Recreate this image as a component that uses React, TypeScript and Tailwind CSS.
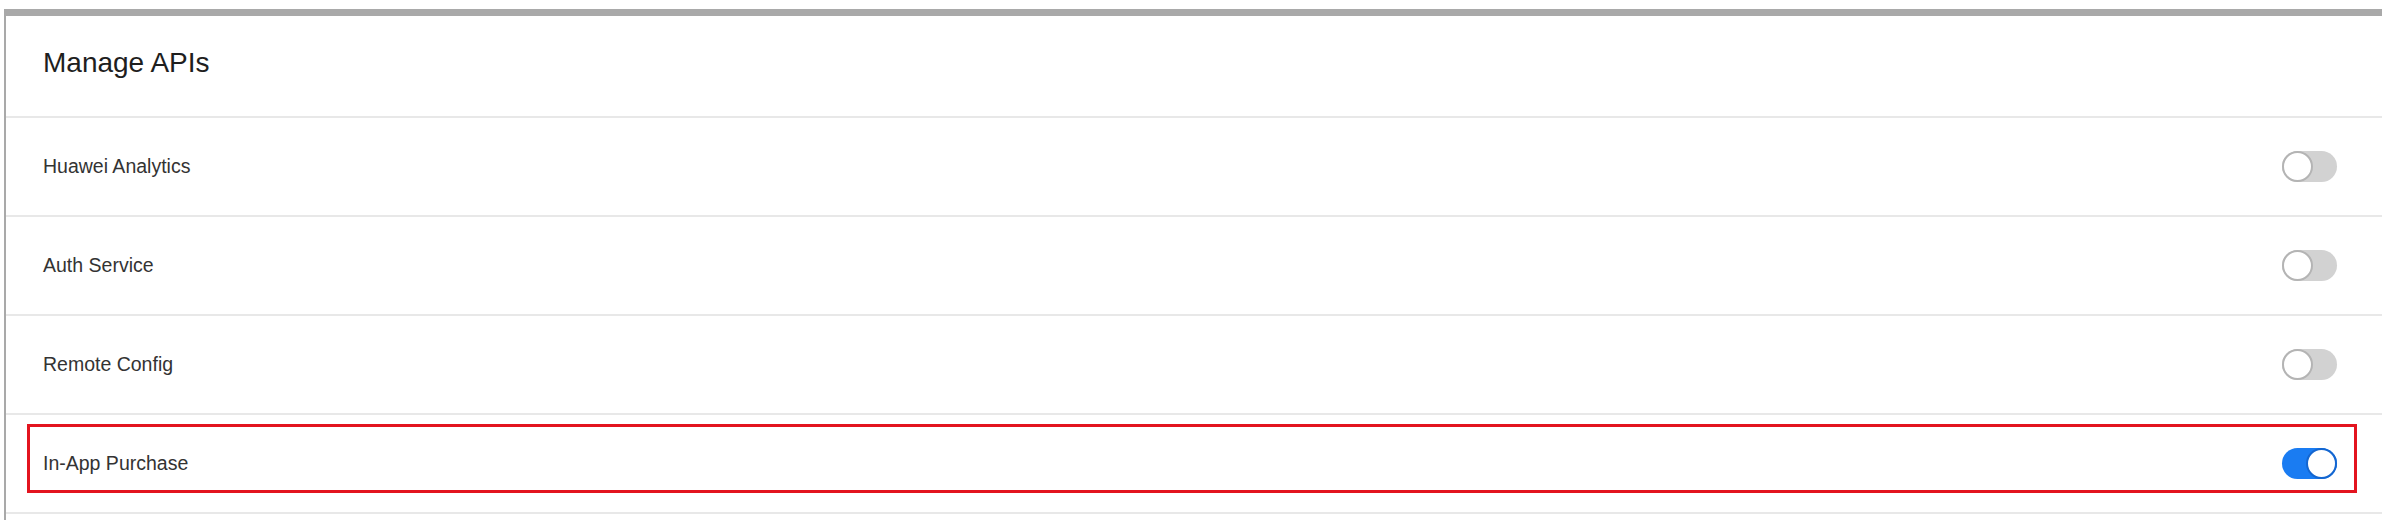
import { useState } from "react";

type Api = { name: string; enabled: boolean };

const initialApis: Api[] = [
  { name: "Huawei Analytics", enabled: false },
  { name: "Auth Service", enabled: false },
  { name: "Remote Config", enabled: false },
  { name: "In-App Purchase", enabled: true },
];

const Toggle = ({ on, onClick }: { on: boolean; onClick: () => void }) => {
  return (
    <button
      onClick={onClick}
      className={`flex h-[31px] w-[55px] items-center rounded-full ${
        on ? "justify-end bg-[#1a7cf2]" : "justify-start bg-[#d2d2d2]"
      }`}
    >
      <span
        className={`block h-[31px] w-[31px] rounded-full border-[2px] bg-white ${
          on ? "border-[#1466d0]" : "border-[#b4b4b4]"
        }`}
      />
    </button>
  );
};

const App = () => {
  const [apis, setApis] = useState(initialApis);

  const toggle = (i: number) => {
    setApis(apis.map((a, idx) => (idx === i ? { ...a, enabled: !a.enabled } : a)));
  };

  return (
    <div className="h-[520px] w-full overflow-hidden bg-white pt-[9px] pl-[4px] font-['Liberation_Sans',Arial,sans-serif]">
      <div className="w-[2378px] border-t-[7px] border-l-[2px] border-[#a9a9a9] h-[511px]">
        <div className="flex h-[102px] items-center border-b-[2px] border-[#e8e8e8] pl-[37px] pb-[6px]">
          <h1 className="text-[28px] text-[#1e1e1e]">Manage APIs</h1>
        </div>
        {apis.map((api, i) => (
          <div
            key={api.name}
            className="relative flex h-[99px] items-center justify-between border-b-[2px] border-[#e8e8e8] pl-[37px] pr-[45px]"
          >
            <span className="text-[19.5px] text-[#333333]">{api.name}</span>
            <Toggle on={api.enabled} onClick={() => toggle(i)} />
            {i === 3 && (
              <div className="pointer-events-none absolute top-[9px] left-[21px] right-[25px] h-[69px] border-[3px] border-[#e3141f]" />
            )}
          </div>
        ))}
      </div>
    </div>
  );
};

export default App;
